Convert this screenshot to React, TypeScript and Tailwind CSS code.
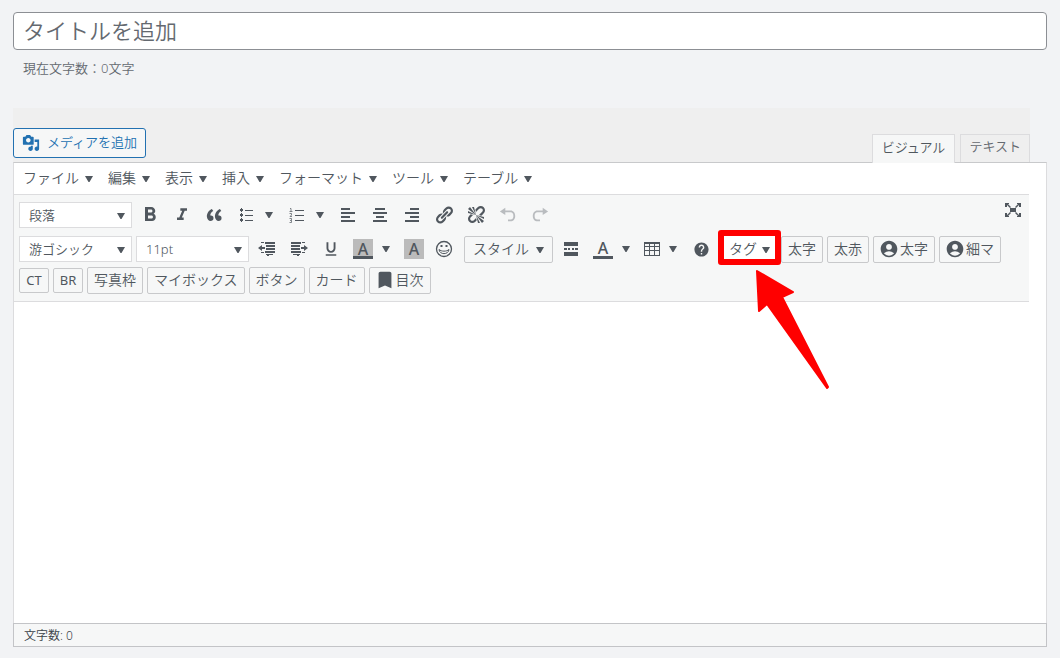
import React from 'react';
import { MdAccountCircle, MdBookmark, MdFormatBold, MdFormatItalic, MdFormatUnderlined, MdHelp } from 'react-icons/md';

const menus = ['ファイル', '編集', '表示', '挿入', 'フォーマット', 'ツール', 'テーブル'];

const paths = {
  media:
    'M13 11V4c0-.55-.45-1-1-1h-1.67L9 1H5L3.67 3H2c-.55 0-1 .45-1 1v7c0 .55.45 1 1 1h10c.55 0 1-.45 1-1zM7 4.5c1.38 0 2.5 1.12 2.5 2.5S8.38 9.5 7 9.5 4.5 8.38 4.5 7 5.62 4.5 7 4.5zM14 6h5v10.5c0 1.38-1.12 2.5-2.5 2.5S14 17.88 14 16.5s1.12-2.5 2.5-2.5c.17 0 .34.02.5.05V9h-3V6zm-4 8.05V13h2v3.5c0 1.38-1.12 2.5-2.5 2.5S7 17.88 7 16.5 8.12 14 9.5 14c.17 0 .34.02.5.05z',
  quote:
    'M9.49 13.22c0-.74-.2-1.38-.61-1.9-.62-.78-1.83-.88-2.53-.72-.29-1.65 1.11-3.75 2.92-4.65L7.88 4c-2.73 1.3-5.42 4.28-4.96 8.05C3.21 14.43 4.59 16 6.54 16c.85 0 1.56-.25 2.12-.75s.83-1.18.83-2.03zm8.05 0c0-.74-.2-1.38-.61-1.9-.63-.78-1.83-.88-2.53-.72-.29-1.65 1.11-3.75 2.92-4.65L15.93 4c-2.73 1.3-5.41 4.28-4.95 8.05.29 2.38 1.66 3.95 3.61 3.95.85 0 1.56-.25 2.12-.75s.83-1.18.83-2.03z',
  list: 'M4 4h3v2H4zM5 3h1v4H5zM4 9h3v2H4zM5 8h1v4H5zM4 14h3v2H4zM5 13h1v4H5zM9 5h8v1H9zM9 10h8v1H9zM9 15h8v1H9z',
  alignLeft: 'M3 3h9v2H3zM3 7h14v2H3zM3 11h9v2H3zM3 15h14v2H3z',
  alignCenter: 'M5 3h10v2H5zM3 7h14v2H3zM6 11h8v2H6zM3 15h14v2H3z',
  alignRight: 'M8 3h9v2H8zM3 7h14v2H3zM8 11h9v2H8zM3 15h14v2H3z',
  link:
    'M17.74 2.76c1.68 1.69 1.68 4.41 0 6.1l-1.53 1.52c-1.12 1.12-2.7 1.47-4.14 1.09l2.62-2.61.76-.77.76-.76c.84-.84.84-2.2 0-3.04-.84-.85-2.2-.85-3.04 0l-.77.76-3.38 3.38c-.37-1.44-.02-3.02 1.1-4.14l1.52-1.53c1.69-1.68 4.42-1.68 6.1 0zM8.59 13.43l5.34-5.34c.42-.42.42-1.1 0-1.52-.44-.43-1.13-.39-1.53 0l-5.33 5.34c-.42.42-.42 1.1 0 1.52.44.43 1.13.39 1.52 0zm-.76 2.29l4.14-4.15c.38 1.44.03 3.02-1.09 4.14l-1.52 1.53c-1.69 1.68-4.41 1.68-6.1 0-1.68-1.68-1.68-4.42 0-6.1l1.53-1.52c1.12-1.12 2.7-1.47 4.14-1.1l-4.14 4.15c-.85.84-.85 2.2 0 3.05.84.84 2.2.84 3.04 0z',
  unlink:
    'M17.74 2.26c1.68 1.69 1.68 4.41 0 6.1l-1.53 1.52c-.32.33-.69.58-1.08.77L13 10l1.69-1.64.76-.77.76-.76c.84-.84.84-2.2 0-3.04-.84-.85-2.2-.85-3.04 0l-.77.76-.76.76L10 7l-.65-2.14c.19-.38.44-.75.77-1.07l1.52-1.53c1.69-1.68 4.42-1.68 6.1 0zM2 4l8 6-6-8zm4-2l4 8-2-8H6zM2 6l8 4-8-2V6zm7.36 7.69L10 13l.74 2.35-1.38 1.39c-1.69 1.68-4.41 1.68-6.1 0-1.68-1.68-1.68-4.42 0-6.1l1.39-1.38L7 10l-.69.64-1.52 1.53c-.85.84-.85 2.2 0 3.04.84.85 2.2.85 3.04 0zM18 16l-8-6 6 8zm-4 2l-4-8 2 8h2zm4-4l-8-4 8 2v2z',
  undo: 'M7 2v3h6c2.800 0 5 2.500 5 6s-2.200 6-5 6h-3v-2h3c1.700 0 3-1.500 3-4s-1.300-4-3-4H7v3L1 6z',
  redo: 'M13 2v3H7c-2.800 0-5 2.500-5 6s2.200 6 5 6h3v-2H7c-1.700 0-3-1.500-3-4s1.300-4 3-4h6v3l6-4z',
  outdent:
    'M4 3h3v1H4zM8 3h10v2H8zM9 6h9v2H9zM9 9h9v2H9zM8 12h10v2H8zM4 13h3v1H4zM9 15h7v1H9zM10 16h2v1h-2zM1 9l4-3v2h3v2H5v2z',
  indent:
    'M13 3h3v1h-3zM2 3h10v2H2zM2 6h9v2H2zM2 9h9v2H2zM2 12h10v2H2zM13 13h3v1h-3zM4 15h7v1H4zM8 16h2v1H8zM19 9l-4-3v2h-3v2h3v2z',
  more: 'M3 3h14v4H3zM3 9h3v2H3zM7 9h2v2H7zM11 9h2v2h-2zM14 9h3v2h-3zM3 13h14v4H3z',
  table: 'M2 3h16v14H2zM3 5v2h4V5zM8 5v2h4V5zM13 5v2h4V5zM3 8v3h4V8zM8 8v3h4V8zM13 8v3h4V8zM3 12v4h4v-4zM8 12v4h4v-4zM13 12v4h4v-4z',
  fullscreen:
    'M7 8h6v4H7zM2 3h4v1H5l3 3-1 1-3-3v2H2zM18 3h-4v1h1l-3 3 1 1 3-3v2h2zM2 17h4v-1H5l3-3-1-1-3 3v-2H2zM18 17h-4v-1h1l-3-3 1-1 3 3v-2h2z',
};

const Icon = ({ name, className = 'size-5' }: { name: keyof typeof paths; className?: string }) => (
  <svg viewBox="0 0 20 20" fill="currentColor" fillRule={name === 'table' || name === 'media' ? 'evenodd' : 'nonzero'} className={className}>
    <path d={paths[name]} />
  </svg>
);

const Caret = ({ className = '' }: { className?: string }) => (
  <svg viewBox="0 0 8 6" fill="currentColor" className={`h-[6px] w-2 shrink-0 ${className}`}>
    <path d="M0 0h8L4.500 6h-1z" />
  </svg>
);

const Tool = ({ label, children, className = 'w-7' }: { label: string; children: React.ReactNode; className?: string }) => (
  <button type="button" aria-label={label} className={`flex h-[26px] shrink-0 items-center justify-center ${className}`}>
    {children}
  </button>
);

const SplitTool = ({ label, children, className = 'w-7' }: { label: string; children: React.ReactNode; className?: string }) => (
  <div className="flex shrink-0">
    <Tool label={label} className={className}>
      {children}
    </Tool>
    <Tool label={`${label}メニュー`} className="w-[19px] pr-[2px]">
      <Caret />
    </Tool>
  </div>
);

const TextTool = ({ children }: { children: React.ReactNode }) => (
  <button
    type="button"
    className="flex h-[27px] shrink-0 items-center gap-[2px] rounded-xs border border-[#c8c9cb] bg-[#f6f7f7] px-[6px] pb-[2px] text-sm leading-5"
  >
    {children}
  </button>
);

const SelectTool = ({ label, value }: { label: string; value: string }) => (
  <div className="relative shrink-0">
    <select
      aria-label={label}
      defaultValue={value}
      className="block h-[26px] w-[113px] appearance-none border border-[#dcdcde] bg-white pb-px pl-[9px] text-[13px] leading-5"
    >
      <option>{value}</option>
    </select>
    <Caret className="pointer-events-none absolute top-[11px] right-[7px]" />
  </div>
);

export default function App() {
  return (
    <div className="flex min-h-screen flex-col bg-[#f2f3f5] px-[13px] pt-3 pb-[11px] font-['Noto_Sans','Noto_Sans_CJK_JP',sans-serif] font-[350] text-[#50575e]">
      <input
        type="text"
        aria-label="タイトル"
        placeholder="タイトルを追加"
        className="h-[38px] w-full rounded-sm border border-[#8c8f94] bg-white px-[9px] pb-[2px] text-[22px] placeholder:text-[#646970]"
      />
      <p className="mt-2 pl-[10px] text-[13px] leading-5 text-[#646970]">現在文字数：0文字</p>

      <div className="mt-[30px] mr-[17px] flex items-end justify-between bg-[#efefef] pt-5">
        <button
          type="button"
          className="mb-1 flex h-[30px] items-center gap-[7px] rounded-[3px] border border-[#2271b1] bg-[#f6f7f7] px-2 text-[13px] text-[#2271b1]"
        >
          <Icon name="media" className="size-[18px]" />
          メディアを追加
        </button>
        <div className="flex gap-[5px] text-[13px]" role="tablist">
          <button
            type="button"
            role="tab"
            aria-selected="true"
            className="relative z-10 -mb-px h-[29px] border border-b-0 border-[#dcdcde] bg-[#f6f7f7] px-[9px] pb-[3px]"
          >
            ビジュアル
          </button>
          <button
            type="button"
            role="tab"
            aria-selected="false"
            className="h-7 border border-b-0 border-[#dcdcde] bg-[#efefef] px-2 pb-[3px] text-[#646970]"
          >
            テキスト
          </button>
        </div>
      </div>

      {/* エディター */}
      <div className="flex grow flex-col border-x border-t border-[#dcdcde] border-t-[#c8c9cb] bg-white">
        <div className="mr-[17px] flex h-8 items-center gap-[15px] border-b border-[#dcdcde] pl-[9px] text-sm">
          {menus.map((menu) => (
            <button key={menu} type="button" className="flex items-center gap-[6px] pb-[2px] leading-5">
              {menu}
              <Caret className="mt-[2px]" />
            </button>
          ))}
        </div>

        <div className="relative mr-[17px] border-b border-[#dcdcde] bg-[#f6f7f7] px-[5px] py-[7px]">
          <div className="flex items-start gap-1">
            <SelectTool label="書式" value="段落" />
            <Tool label="太字">
              <MdFormatBold className="size-6" />
            </Tool>
            <Tool label="斜体">
              <MdFormatItalic className="size-5" />
            </Tool>
            <Tool label="引用">
              <Icon name="quote" />
            </Tool>
            <SplitTool label="箇条書き">
              <Icon name="list" />
            </SplitTool>
            <SplitTool label="番号付きリスト">
              <svg viewBox="0 0 16 16" fill="none" stroke="currentColor" className="size-4">
                <path d="M6 3.500h9M6 8.500h9M6 13.500h9" />
                <path d="M1 1.500h1v3M.5 4.500h3M.5 6.500h2v1.500L1 9.500h2M.5 11.500h2v4h-2M1 13.500h1" strokeWidth=".7" />
              </svg>
            </SplitTool>
            <Tool label="左揃え">
              <Icon name="alignLeft" />
            </Tool>
            <Tool label="中央揃え">
              <Icon name="alignCenter" />
            </Tool>
            <Tool label="右揃え">
              <Icon name="alignRight" />
            </Tool>
            <Tool label="リンク">
              <Icon name="link" />
            </Tool>
            <Tool label="リンク解除">
              <Icon name="unlink" />
            </Tool>
            <Tool label="元に戻す" className="w-7 text-[#b9bcbf]">
              <Icon name="undo" className="size-[18px]" />
            </Tool>
            <Tool label="やり直し" className="w-7 text-[#b9bcbf]">
              <Icon name="redo" className="size-[18px]" />
            </Tool>
          </div>

          <div className="mt-2 flex items-start gap-1">
            <SelectTool label="フォント" value="游ゴシック" />
            <SelectTool label="文字サイズ" value="11pt" />
            <Tool label="インデント解除">
              <Icon name="outdent" />
            </Tool>
            <Tool label="インデント">
              <Icon name="indent" />
            </Tool>
            <Tool label="下線">
              <MdFormatUnderlined className="size-[18px]" />
            </Tool>
            <SplitTool label="背景色">
              <span className="h-5 w-5 border-b-3 border-[#50575e] bg-[#bbbbbb] text-center text-base leading-5 font-medium">A</span>
            </SplitTool>
            <Tool label="マーカー">
              <span className="h-5 w-5 bg-[#bbbbbb] text-center text-base leading-5 font-medium">A</span>
            </Tool>
            <Tool label="絵文字" className="w-7 pr-1">
              <svg viewBox="0 0 18 18" fill="none" stroke="currentColor" strokeWidth="1.300" className="size-[18px]">
                <circle cx="9" cy="9" r="7.500" />
                <path d="M4 9.500c.5 5.500 9.500 5.500 10 0-2.500 2.200-7.500 2.200-10 0z" strokeWidth="1" />
                <path d="M6.500 5v2M11.500 5v2" strokeWidth="2" />
              </svg>
            </Tool>
            <button
              type="button"
              className="flex h-[27px] w-[89px] shrink-0 items-center justify-between rounded-xs border border-[#c8c9cb] px-2 pb-px text-sm leading-5"
            >
              スタイル
              <Caret className="mt-px" />
            </button>
            <Tool label="続きを読む">
              <Icon name="more" />
            </Tool>
            <SplitTool label="文字色">
              <span className="h-5 w-5 border-b-3 border-[#50575e] text-center text-base leading-[18px] font-medium">A</span>
            </SplitTool>
            <SplitTool label="表" className="w-6">
              <Icon name="table" />
            </SplitTool>
            <Tool label="ヘルプ" className="w-[27px] pl-[2px]">
              <MdHelp className="size-[17px]" />
            </Tool>
            <div className="relative shrink-0">
              <button
                type="button"
                className="flex h-[27px] w-[59px] items-center justify-between bg-white pr-[7px] pb-px pl-[11px] text-sm leading-5"
              >
                タグ
                <Caret className="mt-px" />
              </button>
              <span className="pointer-events-none absolute -top-[6px] -right-1 -bottom-[2px] left-0 z-10 rounded-[3px] border-6 border-[#ff0000]" />
              <svg
                viewBox="0 0 76 122"
                className="pointer-events-none absolute top-8 left-9 z-10 h-[122px] w-[76px]"
                fill="#ff0000"
                stroke="#ff0000"
                strokeWidth="2"
                strokeLinejoin="round"
              >
                <path d="M3 3l36 21-11 5 46 90-1 1-60-84-8 7z" />
              </svg>
            </div>
            <TextTool>太字</TextTool>
            <TextTool>太赤</TextTool>
            <TextTool>
              <MdAccountCircle className="-mr-px -ml-px size-5" />
              太字
            </TextTool>
            <TextTool>
              <MdAccountCircle className="-mr-px -ml-px size-5" />
              細マ
            </TextTool>
          </div>

          <div className="mt-1 flex items-center gap-1">
            <button type="button" className="h-[25px] w-[30px] rounded-xs border border-[#c8c9cb] text-[13px] font-normal">
              CT
            </button>
            <button type="button" className="h-[25px] w-[30px] rounded-xs border border-[#c8c9cb] text-[13px] font-normal">
              BR
            </button>
            <TextTool>写真枠</TextTool>
            <TextTool>マイボックス</TextTool>
            <TextTool>ボタン</TextTool>
            <TextTool>カード</TextTool>
            <TextTool>
              <MdBookmark className="-mr-[2px] -ml-[2px] size-[22px]" />
              目次
            </TextTool>
          </div>

          <button type="button" aria-label="集中執筆モード" className="absolute top-[5px] right-[6px]">
            <Icon name="fullscreen" />
          </button>
        </div>

        <textarea aria-label="本文" className="block w-full grow resize-none bg-white p-3 outline-none" />
      </div>

      <div className="h-6 shrink-0 border border-[#c3c4c7] bg-[#f6f7f7] pl-[10px] text-xs leading-6 text-[#3c434a]">
        文字数: 0
      </div>
    </div>
  );
}
